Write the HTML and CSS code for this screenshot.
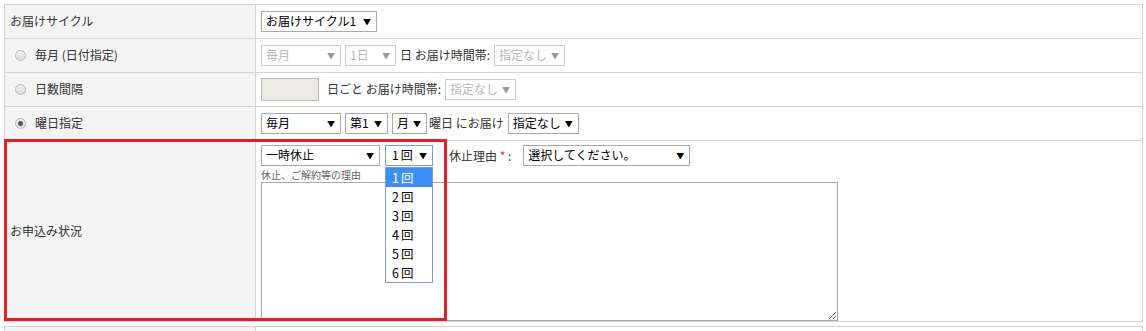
FILE: index.html
```html
<!DOCTYPE html>
<html lang="ja">
<head>
    <meta charset="UTF-8">
    <meta name="viewport" content="width=device-width, initial-scale=1.0">
    <title>定期購入 - お届け設定</title>
    <link rel="stylesheet" href="styles.css">
</head>
<body>
    <div class="page">
        <table class="form-table">
            <tr>
                <th>お届けサイクル</th>
                <td>
                    <div class="field">
                        <span class="select sel-cycle"><select><option>お届けサイクル1</option></select></span>
                    </div>
                </td>
            </tr>
            <tr>
                <th><span class="radio"></span>毎月 (日付指定)</th>
                <td>
                    <div class="field">
                        <span class="select sel-month is-disabled"><select disabled><option>毎月</option></select></span>
                        <span class="select sel-day is-disabled"><select disabled><option>1日</option></select></span>
                        <span>日 お届け時間帯:</span>
                        <span class="select sel-time is-disabled"><select disabled><option>指定なし</option></select></span>
                    </div>
                </td>
            </tr>
            <tr>
                <th><span class="radio"></span>日数間隔</th>
                <td>
                    <div class="field">
                        <input type="text" class="interval" disabled>
                        <span class="text-gap">日ごと お届け時間帯:</span>
                        <span class="select sel-time is-disabled"><select disabled><option>指定なし</option></select></span>
                    </div>
                </td>
            </tr>
            <tr>
                <th><span class="radio is-checked"></span>曜日指定</th>
                <td>
                    <div class="field">
                        <span class="select sel-month"><select><option>毎月</option></select></span>
                        <span class="select sel-week"><select><option>第1</option></select></span>
                        <span class="select sel-dow"><select><option>月</option></select></span>
                        <span class="text-tight">曜日 にお届け</span>
                        <span class="select sel-time"><select><option>指定なし</option></select></span>
                    </div>
                </td>
            </tr>
            <tr class="status-row">
                <th>お申込み状況</th>
                <td>
                    <div class="field field-top">
                        <span class="select sel-status"><select><option>一時休止</option></select></span>
                        <span class="select sel-count is-focused">
                            <select><option>1回</option></select>
                            <ul class="dropdown">
                                <li class="is-active">1回</li>
                                <li>2回</li>
                                <li>3回</li>
                                <li>4回</li>
                                <li>5回</li>
                                <li>6回</li>
                            </ul>
                        </span>
                        <span class="reason-label">休止理由 <span class="required">*</span> :</span>
                        <span class="select sel-reason"><select><option>選択してください。</option></select></span>
                    </div>
                    <div class="hint">休止、ご解約等の理由</div>
                    <textarea class="reason-text"></textarea>
                </td>
            </tr>
        </table>

        <table class="form-table next-table">
            <tr>
                <th></th>
                <td></td>
            </tr>
        </table>

        <div class="highlight-box"></div>
    </div>
</body>
</html>
```

FILE: styles.css
```css
* {
    box-sizing: border-box;
    margin: 0;
    padding: 0;
}

body {
    background: #fff;
    color: #333;
    font-family: "Noto Sans CJK JP", "Liberation Sans", sans-serif;
    font-size: 12px;
    line-height: 1.4;
}

.page {
    position: relative;
    padding: 4px 0 0 4px;
}

.form-table {
    width: 1139px;
    border-collapse: collapse;
}

.form-table th,
.form-table td {
    border: 1px solid #d3d3d3;
    height: 34px;
    vertical-align: middle;
    text-align: left;
    font-weight: normal;
}

.form-table th {
    width: 251px;
    background: #f3f4f3;
    padding: 0 5px;
}

.form-table td {
    padding: 0 5px;
}

.next-table {
    margin-top: 4px;
}

.field {
    display: flex;
    align-items: center;
    gap: 4px;
    color: #333;
}

.field-top {
    align-items: flex-start;
}

.radio {
    display: inline-block;
    width: 11px;
    height: 11px;
    border: 1px solid #b8b8b8;
    border-radius: 50%;
    background: linear-gradient(#f2f2f2, #dcdcdc);
    margin: 0 9px 0 5px;
    vertical-align: -1px;
    position: relative;
}

.radio.is-checked::after {
    content: "";
    position: absolute;
    left: 2px;
    top: 2px;
    width: 5px;
    height: 5px;
    border-radius: 50%;
    background: #555;
}

/* select boxes */
.select {
    position: relative;
    display: inline-block;
    height: 21px;
}

.select select {
    appearance: none;
    -webkit-appearance: none;
    width: 100%;
    height: 21px;
    border: 1px solid #a9a9a9;
    background: #fff;
    color: #000;
    font: inherit;
    font-size: 12px;
    padding: 0 16px 0 4px;
    border-radius: 0;
}

.select::after {
    content: "▼";
    position: absolute;
    right: 6px;
    top: 4px;
    font-size: 8px;
    line-height: 13px;
    color: #000;
    pointer-events: none;
}

.select.is-disabled select {
    color: #999;
    border-color: #b9b9b9;
}

.select.is-disabled::after {
    color: #999;
}

.select.is-focused select {
    border-color: #7a9cd3;
}

.sel-cycle { width: 116px; }
.sel-month { width: 80px; }
.sel-day { width: 51px; }
.sel-time { width: 71px; }
.sel-week { width: 43px; }
.sel-dow { width: 35px; }
.sel-status { width: 119px; }
.sel-count { width: 48px; margin-left: 1px; }
.sel-reason { width: 167px; margin-left: 8px; }

.sel-count select {
    letter-spacing: 2px;
    padding-left: 6px;
}

.interval {
    width: 58px;
    height: 23px;
    border: 1px solid #b9b9b9;
    background: #ebebe4;
}

.text-gap {
    margin-left: 4px;
}

.text-tight {
    margin-left: -2px;
}

.reason-label {
    margin-left: 12px;
    line-height: 21px;
}

.required {
    color: #e0323a;
}

.dropdown {
    position: absolute;
    top: 22px;
    left: 0;
    width: 48px;
    list-style: none;
    background: #fff;
    border: 1px solid #7a9cd3;
    z-index: 2;
}

.dropdown li {
    height: 19px;
    line-height: 19px;
    padding-left: 6px;
    color: #000;
    font-size: 12.5px;
    letter-spacing: 2px;
}

.dropdown li.is-active {
    background: #3d8ff5;
    color: #fff;
}

/* status row */
.status-row td {
    vertical-align: top;
    padding-top: 4px;
    padding-bottom: 0;
}

.hint {
    font-size: 10px;
    color: #666;
    line-height: 14px;
    margin-top: 2px;
}

.reason-text {
    display: block;
    width: 577px;
    height: 139px;
    border: 1px solid #a9a9a9;
    font: inherit;
    margin-bottom: 0;
}

.highlight-box {
    position: absolute;
    left: 4px;
    top: 139px;
    width: 443px;
    height: 182px;
    border: 3px solid #e61e25;
    pointer-events: none;
}
```
